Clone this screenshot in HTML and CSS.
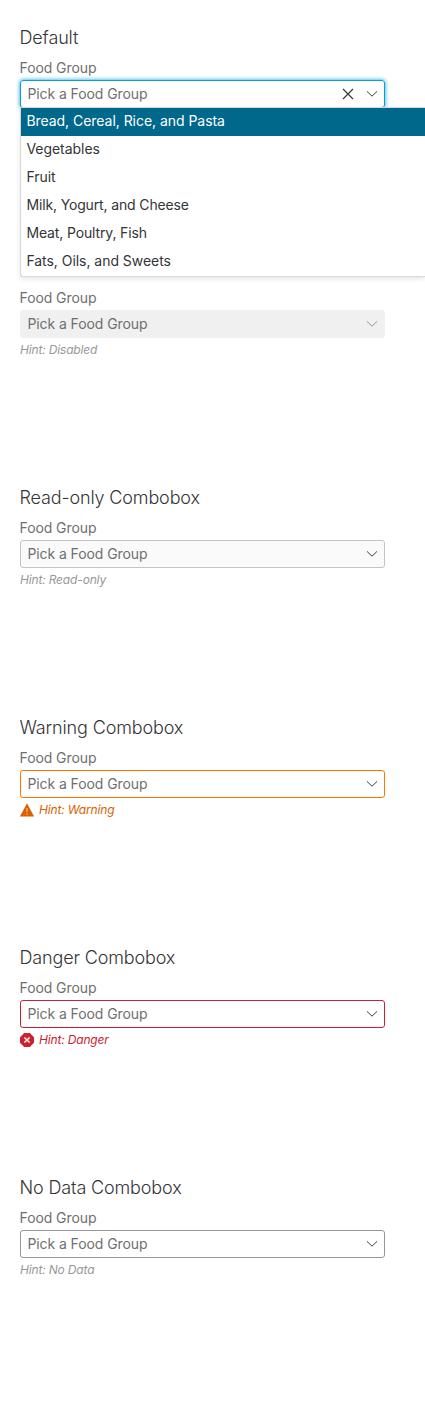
FILE: index.html
```html
<!DOCTYPE html>
<html lang="en">
<head>
<meta charset="utf-8">
<title>Combobox</title>
<link rel="stylesheet" href="styles.css">
</head>
<body>
<svg class="symbols" aria-hidden="true">
  <symbol id="chevron" viewBox="0 0 12 8"><path d="M1 1.4 6 6.2 11 1.4" fill="none" stroke="currentColor" stroke-width=".95"/></symbol>
  <symbol id="close" viewBox="0 0 12 12"><path d="M1 1 11 11M11 1 1 11" fill="none" stroke="currentColor" stroke-width="1.15"/></symbol>
  <symbol id="warning" viewBox="0 0 14 14"><path d="M7 .8 13.7 13.2H.3Z" fill="currentColor" stroke="currentColor" stroke-width=".5" stroke-linejoin="round"/><path d="M7 5v4.2M7 10.5v1.2" stroke="#f0b98c" stroke-width="1.2"/></symbol>
  <symbol id="danger" viewBox="0 0 14 14"><path d="M4.2 0h5.6L14 4.2v5.6L9.8 14H4.2L0 9.8V4.2Z" fill="currentColor" /><path d="M4.4 4.4 9.6 9.6M9.6 4.4 4.4 9.6" stroke="#fff" stroke-width="1.4"/></symbol>
</svg>
<main class="page">
  <section class="example">
    <h4 class="title">Default</h4>
    <div class="label">Food Group</div>
    <div class="combobox focused">
      <span class="placeholder">Pick a Food Group</span>
      <svg class="close"><use href="#close"/></svg>
      <svg class="chevron"><use href="#chevron"/></svg>
      <ul class="menu">
        <li class="option selected">Bread, Cereal, Rice, and Pasta</li>
        <li class="option">Vegetables</li>
        <li class="option">Fruit</li>
        <li class="option tight">Milk, Yogurt, and Cheese</li>
        <li class="option tight">Meat, Poultry, Fish</li>
        <li class="option">Fats, Oils, and Sweets</li>
      </ul>
    </div>
  </section>
  <section class="example untitled">
    <div class="label">Food Group</div>
    <div class="combobox disabled">
      <span class="placeholder">Pick a Food Group</span>
      <svg class="chevron"><use href="#chevron"/></svg>
    </div>
    <div class="hint">Hint: Disabled</div>
  </section>
  <section class="example">
    <h4 class="title">Read-only Combobox</h4>
    <div class="label">Food Group</div>
    <div class="combobox readonly">
      <span class="placeholder">Pick a Food Group</span>
      <svg class="chevron"><use href="#chevron"/></svg>
    </div>
    <div class="hint">Hint: Read-only</div>
  </section>
  <section class="example">
    <h4 class="title">Warning Combobox</h4>
    <div class="label">Food Group</div>
    <div class="combobox warning">
      <span class="placeholder">Pick a Food Group</span>
      <svg class="chevron"><use href="#chevron"/></svg>
    </div>
    <div class="hint hint-warning"><svg class="status"><use href="#warning"/></svg>Hint: Warning</div>
  </section>
  <section class="example">
    <h4 class="title">Danger Combobox</h4>
    <div class="label">Food Group</div>
    <div class="combobox danger">
      <span class="placeholder">Pick a Food Group</span>
      <svg class="chevron"><use href="#chevron"/></svg>
    </div>
    <div class="hint hint-danger"><svg class="status"><use href="#danger"/></svg>Hint: Danger</div>
  </section>
  <section class="example">
    <h4 class="title">No Data Combobox</h4>
    <div class="label">Food Group</div>
    <div class="combobox">
      <span class="placeholder">Pick a Food Group</span>
      <svg class="chevron"><use href="#chevron"/></svg>
    </div>
    <div class="hint">Hint: No Data</div>
  </section>
</main>
</body>
</html>
```
FILE: styles.css
```css
* { box-sizing: border-box; }
body {
  margin: 0;
  background: #fff;
  color: #343537;
  font-family: Inter, "Liberation Sans", sans-serif;
  font-size: 14px;
}
.symbols { display: none; }
.page { padding: 20px 40px 20px 20px; }
.example { height: 230px; }
.untitled { padding-top: 36px; }
.title {
  margin: 0 0 0 -0.5px;
  font-size: 18px;
  font-weight: 300;
  letter-spacing: -0.14px;
  line-height: 36px;
}
.label {
  margin-left: -0.5px;
  color: #6f6f6f;
  letter-spacing: -0.08px;
  line-height: 24px;
}
.combobox {
  position: relative;
  display: flex;
  align-items: center;
  height: 28px;
  padding: 0 6px;
  border: 1px solid #979797;
  border-radius: 3px;
}
.placeholder {
  flex: 1;
  padding-left: 0.4px;
  color: #6f6f6f;
  letter-spacing: -0.08px;
  line-height: 26px;
}
.chevron { width: 12px; height: 8px; }
.close { width: 12px; height: 12px; margin-right: 12px; }
.focused { border-color: #049fd9; box-shadow: 0 0 4px #049fd9; }
.disabled { background: #f0f0f0; border-color: #f0f0f0; }
.disabled .chevron { opacity: .5; }
.readonly { background: #fafafa; border-color: #c4c4c4; }
.warning { border-color: #ff7300; }
.danger { border-color: #cf2030; }
.menu {
  position: absolute;
  z-index: 1;
  top: 26px;
  left: -1px;
  width: 405px;
  margin: 0;
  padding: 0;
  list-style: none;
  background: #fff;
  border: 1px solid #d8d8d8;
  border-right: 0;
  border-radius: 0 0 0 3px;
  box-shadow: 0 2px 5px rgba(0, 0, 0, .1);
}
.option {
  height: 28px;
  padding-left: 5.4px;
  letter-spacing: -0.04px;
  line-height: 26px;
}
.tight { letter-spacing: -0.14px; }
.selected { background: #00688b; color: #fff; }
.hint {
  display: flex;
  align-items: center;
  gap: 5px;
  color: #979797;
  font-size: 12px;
  font-style: italic;
  letter-spacing: -0.16px;
  line-height: 24px;
}
.hint-warning { color: #d86200; }
.hint-danger { color: #cf2030; }
.status { width: 14px; height: 14px; }
```
